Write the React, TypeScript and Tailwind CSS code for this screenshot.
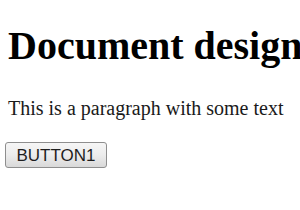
import React from 'react';

const App: React.FC = () => {
  return (
    <div className="h-[210px] overflow-hidden bg-white pl-[8px] pt-[23px] font-['Liberation_Serif','Times_New_Roman',serif] text-black">
      <h1 className="whitespace-nowrap text-[40px] font-bold leading-[46px]">Document design</h1>
      <p className="mt-[28px] text-[20px] leading-[23px] text-[#1a1a1a]">This is a paragraph with some text</p>
      <button
        type="button"
        className="-ml-[3px] mt-[22px] flex h-[26px] w-[102px] items-center justify-center rounded-[3px] border border-[#8e8e8e] bg-gradient-to-b from-[#f6f6f6] via-[#ececec] to-[#d9d9d9] font-['Liberation_Sans',Arial,sans-serif] text-[17px] leading-none text-[#1e1e1e]"
      >
        BUTTON1
      </button>
    </div>
  );
};

export default App;
